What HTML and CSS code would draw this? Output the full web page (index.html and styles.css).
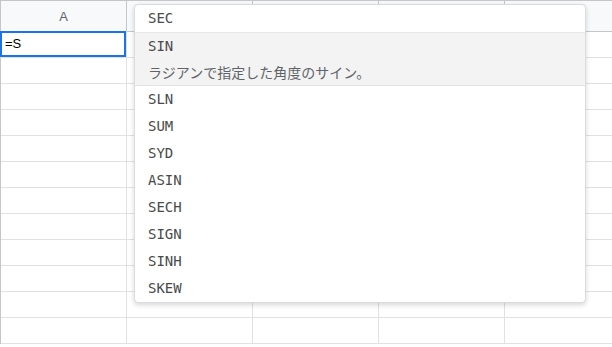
FILE: index.html
```html
<!DOCTYPE html>
<html lang="ja">

<head>
    <meta charset="UTF-8">
    <meta name="viewport" content="width=device-width, initial-scale=1.0">
    <title>Sheet</title>
    <link rel="stylesheet" href="styles.css">
</head>

<body>
    <div class="sheet">
        <div class="head">A</div>
        <div class="head"></div>
        <div class="head"></div>
        <div class="head"></div>
        <div class="head"></div>

        <div class="cell active">=S</div>
        <div class="cell"></div><div class="cell"></div><div class="cell"></div><div class="cell"></div>
        <div class="cell"></div><div class="cell"></div><div class="cell"></div><div class="cell"></div><div class="cell"></div>
        <div class="cell"></div><div class="cell"></div><div class="cell"></div><div class="cell"></div><div class="cell"></div>
        <div class="cell"></div><div class="cell"></div><div class="cell"></div><div class="cell"></div><div class="cell"></div>
        <div class="cell"></div><div class="cell"></div><div class="cell"></div><div class="cell"></div><div class="cell"></div>
        <div class="cell"></div><div class="cell"></div><div class="cell"></div><div class="cell"></div><div class="cell"></div>
        <div class="cell"></div><div class="cell"></div><div class="cell"></div><div class="cell"></div><div class="cell"></div>
        <div class="cell"></div><div class="cell"></div><div class="cell"></div><div class="cell"></div><div class="cell"></div>
        <div class="cell"></div><div class="cell"></div><div class="cell"></div><div class="cell"></div><div class="cell"></div>
        <div class="cell"></div><div class="cell"></div><div class="cell"></div><div class="cell"></div><div class="cell"></div>
        <div class="cell"></div><div class="cell"></div><div class="cell"></div><div class="cell"></div><div class="cell"></div>
        <div class="cell"></div><div class="cell"></div><div class="cell"></div><div class="cell"></div><div class="cell"></div>
    </div>

    <!-- 関数の候補 -->
    <ul class="suggest">
        <li class="item">SEC</li>
        <li class="item selected">
            <span>SIN</span>
            <span class="desc">ラジアンで指定した角度のサイン。</span>
        </li>
        <li class="item">SLN</li>
        <li class="item">SUM</li>
        <li class="item">SYD</li>
        <li class="item">ASIN</li>
        <li class="item">SECH</li>
        <li class="item">SIGN</li>
        <li class="item">SINH</li>
        <li class="item">SKEW</li>
    </ul>
</body>

</html>
```

FILE: styles.css
```css
* {
    margin: 0;
    padding: 0;
    box-sizing: border-box;
}

body {
    position: relative;
    width: 612px;
    height: 347px;
    overflow: hidden;
    background: #fff;
    font-family: Arial, "Liberation Sans", sans-serif;
}

/* grid */
.sheet {
    display: grid;
    grid-template-columns: repeat(5, 126px);
    grid-template-rows: 32px;
    grid-auto-rows: 26px;
    border-left: 1px solid #c4c7c5;
}

.head {
    background: #f8f9fa;
    border-top: 1px solid #c4c7c5;
    border-right: 1px solid #c4c7c5;
    border-bottom: 1px solid #c4c7c5;
    color: #5f6368;
    font-size: 13px;
    display: flex;
    align-items: center;
    justify-content: center;
}

.cell {
    border-right: 1px solid #e1e1e1;
    border-bottom: 1px solid #e1e1e1;
    font-size: 13px;
    color: #000;
    padding-left: 4px;
    line-height: 24px;
}

.active {
    box-shadow: inset 0 0 0 2px #1a73e8;
    margin-left: -1px;
    margin-top: -1px;
    height: 27px;
    padding-left: 5px;
    line-height: 26px;
}

/* suggest */
.suggest {
    position: absolute;
    top: 4px;
    left: 134px;
    width: 452px;
    list-style: none;
    background: #fff;
    border: 1px solid #dadce0;
    border-radius: 4px;
    box-shadow: 0 2px 5px rgba(0, 0, 0, 0.16);
    font-family: "DejaVu Sans Mono", monospace;
    font-size: 14px;
    color: #4a4a4a;
}

.item {
    height: 27px;
    line-height: 27px;
    padding-left: 13px;
}

.selected {
    height: 54px;
    background: #f3f3f3;
    border-top: 1px solid #e8e8e8;
    border-bottom: 1px solid #e3e3e3;
    display: flex;
    flex-direction: column;
    line-height: 26px;
}

.desc {
    font-family: "Noto Sans CJK JP", sans-serif;
    font-size: 14px;
    color: #5f6368;
}
```
